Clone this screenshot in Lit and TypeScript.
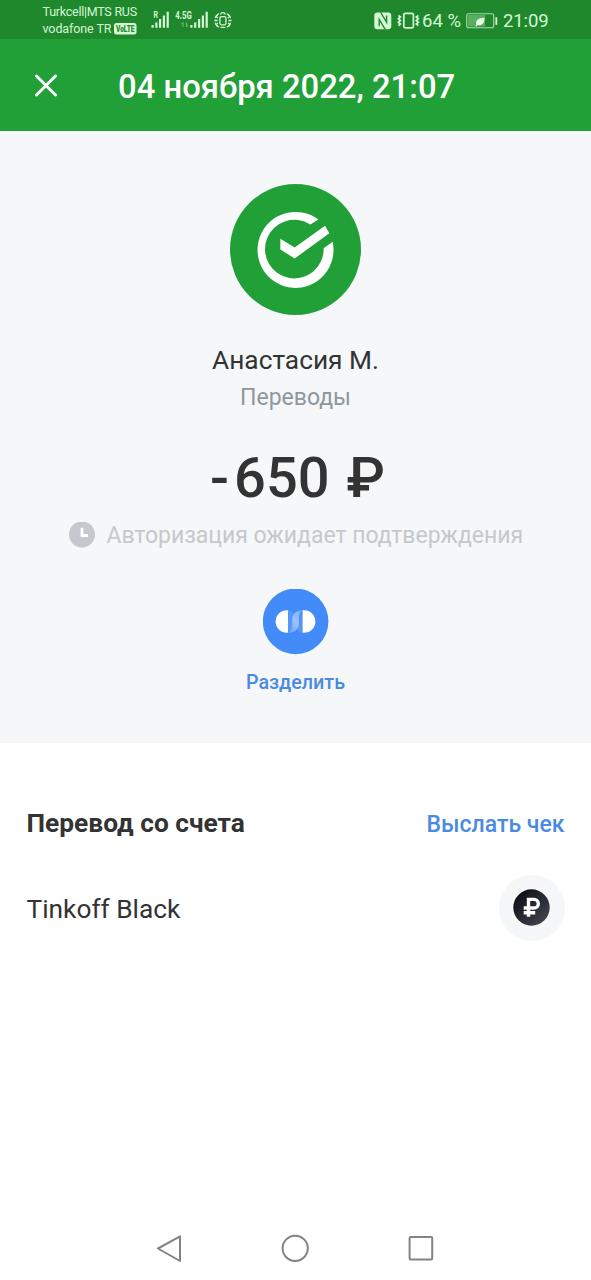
import { LitElement, html, css } from "lit";
import { customElement } from "lit/decorators.js";

@customElement("status-bar")
class StatusBar extends LitElement {
  static styles = css`
    :host {
      display: flex;
      height: 39px;
      background: #1f882d;
      color: #d4f7d4;
      box-sizing: border-box;
      padding-left: 42.5px;
    }
    .carriers {
      width: 105.5px;
      padding-top: 3px;
      font-size: 12.5px;
      line-height: 17px;
      white-space: nowrap;
    }
    .row {
      display: flex;
      align-items: center;
      height: 17px;
    }
    .row.first { letter-spacing: -0.25px; }
    .row.second { letter-spacing: -0.1px; }
    .row svg { margin-left: 2.5px; }
    .right {
      margin-left: auto;
      margin-right: 42px;
      display: flex;
      align-items: center;
      height: 41px;
      font-size: 18.5px;
      white-space: nowrap;
    }
    .right svg { margin-bottom: 1px; }
    .pct { width: 43px; margin-right: 1px; }
    .time { margin-left: 5px; width: 46px; letter-spacing: -0.1px; }
    svg { display: block; flex: none; overflow: visible; }
    .tiny { font: 700 9px Roboto, sans-serif; }
    .gen { font: 700 10px Roboto, sans-serif; }
    .volte { font: 900 8.5px Roboto, sans-serif; letter-spacing: 0; }
  `;
  render() {
    return html`
      <div class="carriers">
        <div class="row first">Turkcell|MTS RUS</div>
        <div class="row second">
          vodafone TR
          <svg width="23" height="12" viewBox="0 0 23 12">
            <rect width="22.5" height="11.5" rx="2.5" fill="#d4f7d4" />
            <text class="volte" x="2" y="8.9" textLength="18.5" lengthAdjust="spacingAndGlyphs" fill="#1f882d">VoLTE</text>
          </svg>
        </div>
      </div>
      <svg width="90" height="39" viewBox="148 0 90 39" fill="#d4f7d4">
        <text class="tiny" x="153.5" y="17.5" textLength="4.5" lengthAdjust="spacingAndGlyphs">R</text>
        <path d="M151.5 25h2.2v2.7h-2.2zM155.3 22.5h2.2v5.2h-2.2zM159 19h2.2v8.7H159zM162.8 15.5h2.2v12.2h-2.2zM166.6 11.8h2.2v15.9h-2.2z" />
        <text class="gen" x="175.3" y="18.5" textLength="16.5" lengthAdjust="spacingAndGlyphs">4.5G</text>
        <path d="M190.3 25h2.2v2.7h-2.2zM194.1 22.5h2.2v5.2h-2.2zM198 19h2.2v8.7H198zM201.8 15.5h2.2v12.2h-2.2zM205.6 11.8h2.2v15.9h-2.2z" />
        <path d="M183 27v-4.5l-1.6 1.8M186.4 22.5V27l1.6-1.8" fill="none" stroke="#7cc47f" stroke-width=".9" />
        <g fill="none" stroke="#d4f7d4" stroke-width="1.3">
          <rect x="219.9" y="16.6" width="6" height="8.2" rx="1.5" />
          <path d="M220.5 14.5a2.5 2.5 0 0 1 4.8 0M217.8 14.5l-1.8 2 2 1.5M217.5 20.5h-3.2M218 23l-2 1.5 1.5 2M228 14.5l1.8 2-2 1.5M228.4 20.5h3.2M228 23l2 1.5-1.5 2M220.5 27.3h4.8" />
          <path d="M215.2 18.2a8 8 0 0 1 3.8-4.7M226.8 13.5a8 8 0 0 1 3.8 4.7M215.2 22.8a8 8 0 0 0 3.8 4.5M226.8 27.3a8 8 0 0 0 3.8-4.5" stroke-width="1.1" />
        </g>
      </svg>
      <div class="right">
        <svg width="48" height="39" viewBox="374 0 48 39" fill="none" stroke="#d4f7d4">
          <rect x="374.3" y="11.5" width="17" height="16.8" rx="3.2" fill="#d4f7d4" stroke="none" />
          <path d="M380.7 11.5L386.6 21.2V14.5M379.2 25.3V18.5L385.2 28.3" stroke="#1f882d" stroke-width="1.4" />
          <rect x="403.8" y="12.3" width="9.6" height="14.5" rx="1.5" stroke-width="1.7" />
          <path d="M398.4 14.5l2 1.5-2 1.7 2 1.8-2 1.8 2 1.7-2 1.7M418.3 14.5l-2 1.5 2 1.7-2 1.8 2 1.8-2 1.7 2 1.7" stroke-width="1.7" />
        </svg>
        <span class="pct">64 %</span>
        <svg width="32" height="39" viewBox="466 0 32 39">
          <rect x="466.7" y="12.7" width="27" height="14" rx="2" fill="#1f882d" stroke="#a9dcab" stroke-width="1.1" />
          <rect x="468" y="14" width="17" height="11.5" fill="#5bad62" />
          <path d="M475.5 25l1-1.5c-1.5-4 2-7 8-6.8.3 5-2.5 8.2-6.8 7.300l-1.200 1.400z" fill="#e8ffe8" />
          <rect x="495.4" y="16" width="1.8" height="8" rx=".8" fill="#d4f7d4" />
        </svg>
        <span class="time">21:09</span>
      </div>
    `;
  }
}

@customElement("nav-keys")
class NavKeys extends LitElement {
  static styles = css`
    :host {
      display: flex;
      justify-content: center;
      gap: 95.5px;
      height: 63px;
      padding-right: 1px;
      align-items: center;
    }
    svg { display: block; }
  `;
  render() {
    return html`
      <svg width="30" height="30" viewBox="0 0 30 30" fill="none" stroke="#838383" stroke-width="2" stroke-linejoin="round"><path d="M3 14.5 25 2.4V27Z" /></svg>
      <svg width="30" height="30" viewBox="0 0 30 30" fill="none" stroke="#838383" stroke-width="2"><circle cx="15.2" cy="14.3" r="12.6" /></svg>
      <svg width="30" height="30" viewBox="0 0 30 30" fill="none" stroke="#838383" stroke-width="2"><rect x="3.6" y="3" width="22.6" height="22.6" rx="1" /></svg>
    `;
  }
}

@customElement("app-root")
class AppRoot extends LitElement {
  static styles = css`
    :host {
      display: flex;
      flex-direction: column;
      width: 591px;
      height: 1280px;
      overflow: hidden;
      background: #fff;
      color: #333;
      font-family: Roboto, sans-serif;
    }
    svg { display: block; flex: none; }
    .header {
      height: 92px;
      display: flex;
      align-items: center;
      background: #21a038;
      color: #fff;
      padding-left: 34px;
      box-sizing: border-box;
    }
    .title {
      margin-left: 60px;
      font-size: 32.8px;
      font-weight: 500;
      line-height: 40px;
      padding-top: 3px;
      white-space: nowrap;
    }
    .panel {
      height: 612px;
      box-sizing: border-box;
      padding-top: 53px;
      background: #f5f7f9;
      display: flex;
      flex-direction: column;
      align-items: center;
      white-space: nowrap;
    }
    .name { margin-top: 27px; font-size: 26.3px; line-height: 36px; }
    .category { margin-top: 1px; font-size: 23px; line-height: 38px; color: #8e979e; }
    .amount {
      margin-top: 27px;
      padding-left: 4px;
      display: flex;
      font-size: 56px;
      font-weight: 500;
      line-height: 68px;
    }
    .minus { margin-right: 5px; }
    .currency { margin-left: 17px; }
    .pending {
      display: flex;
      align-items: center;
      gap: 11.5px;
      padding: 1px 0 0 1px;
      font-size: 23px;
      letter-spacing: -0.03px;
      line-height: 46px;
      color: #c5c8ce;
    }
    .pending svg { margin-bottom: 1px; }
    .split-icon { margin-top: 30px; }
    .split {
      margin-top: 13px;
      font-size: 19.7px;
      font-weight: 500;
      line-height: 30px;
      color: #4a8ae0;
    }
    .account {
      flex: 1;
      padding: 60px 26.5px 0;
    }
    .line {
      display: flex;
      justify-content: space-between;
      align-items: center;
      height: 40px;
    }
    .heading { font-size: 26.3px; font-weight: 700; }
    .link { font-size: 23px; font-weight: 500; color: #4a8ae0; padding-top: 2px; }
    .line.card { height: 66px; margin-top: 32px; }
    .card-name { font-size: 26.3px; padding-top: 2px; }
  `;
  render() {
    return html`
      <status-bar></status-bar>
      <div class="header">
        <svg width="24" height="24" viewBox="0 0 24 24" stroke="#fff" stroke-width="2.9" stroke-linecap="round"><path d="M2.5 3 21.5 22M21.5 3 2.5 22" /></svg>
        <div class="title">04 ноября 2022, 21:07</div>
      </div>
      <div class="panel">
        <svg width="131" height="131" viewBox="59.5 41 393 393">
          <circle cx="256" cy="237.5" r="196.5" fill="#21a038" />
          <path transform="translate(-2.5 -2.5)" fill="#fff" d="M327 150A114 114 0 1 0 370 217L343 236A88 88 0 1 1 303 165ZM213 208L256 234 347 169 360 191 256 267 213 240Z" />
        </svg>
        <div class="name">Анастасия М.</div>
        <div class="category">Переводы</div>
        <div class="amount"><span class="minus">-</span><span>650</span><span class="currency">₽</span></div>
        <div class="pending">
          <svg width="26" height="28" viewBox="0 0 26 28"><circle cx="13" cy="12.5" r="13" fill="#c5c8ce" /><path d="M13 5.8V13.500H19" fill="none" stroke="#fff" stroke-width="2.8" /></svg>
          <span>Авторизация ожидает подтверждения</span>
        </div>
        <svg class="split-icon" width="66" height="66" viewBox="0.4 0.6 66 66">
          <defs>
            <linearGradient id="s" x1="0" y1="1" x2="1" y2="0"><stop offset="0" stop-color="#5f9dfb" /><stop offset=".5" stop-color="#9dc2fd" /><stop offset="1" stop-color="#76abfc" /></linearGradient>
          </defs>
          <circle cx="33" cy="33" r="32.8" fill="#428bf9" />
          <path d="M25.5 21.8V44.4H24.3A11.3 11.3 0 0 1 24.3 21.8ZM39.8 21.8H41.5A11.3 11.3 0 0 1 41.5 44.4H39.8Z" fill="#fff" />
          <path d="M25.5 21.8C29 22.3 30.8 24 31.500 26L29 44C28 44.400 27 44.400 25.500 44.400ZM39.800 21.800V44.400C37.500 44 36 43 35 41.500Z" fill="#5697fa" />
          <path d="M39.800 21.800C33 21.800 29.600 26 29.600 32C29.600 38 29 42.500 25.500 44.400C32.500 44.400 36.500 40 36.500 34C36.500 28 36.500 24 39.800 21.800Z" fill="url(#s)" />
        </svg>
        <div class="split">Разделить</div>
      </div>
      <div class="account">
        <div class="line"><span class="heading">Перевод со счета</span><span class="link">Выслать чек</span></div>
        <div class="line card">
          <span class="card-name">Tinkoff Black</span>
          <svg width="66" height="66" viewBox="0 0 66 66">
            <defs><linearGradient id="g" x1="0" y1="0" x2="1" y2="1"><stop offset=".2" stop-color="#10141c" /><stop offset="1" stop-color="#4a4d55" /></linearGradient></defs>
            <circle cx="33" cy="33" r="33" fill="#f6f7f8" />
            <circle cx="32.5" cy="32.5" r="18.2" fill="url(#g)" />
            <path d="M29.5 41.800V24.400H35A4.200 4.200 0 0 1 35 33H24.700M24.700 37.700H36.200" fill="none" stroke="#fff" stroke-width="3.4" />
          </svg>
        </div>
      </div>
      <nav-keys></nav-keys>
    `;
  }
}
